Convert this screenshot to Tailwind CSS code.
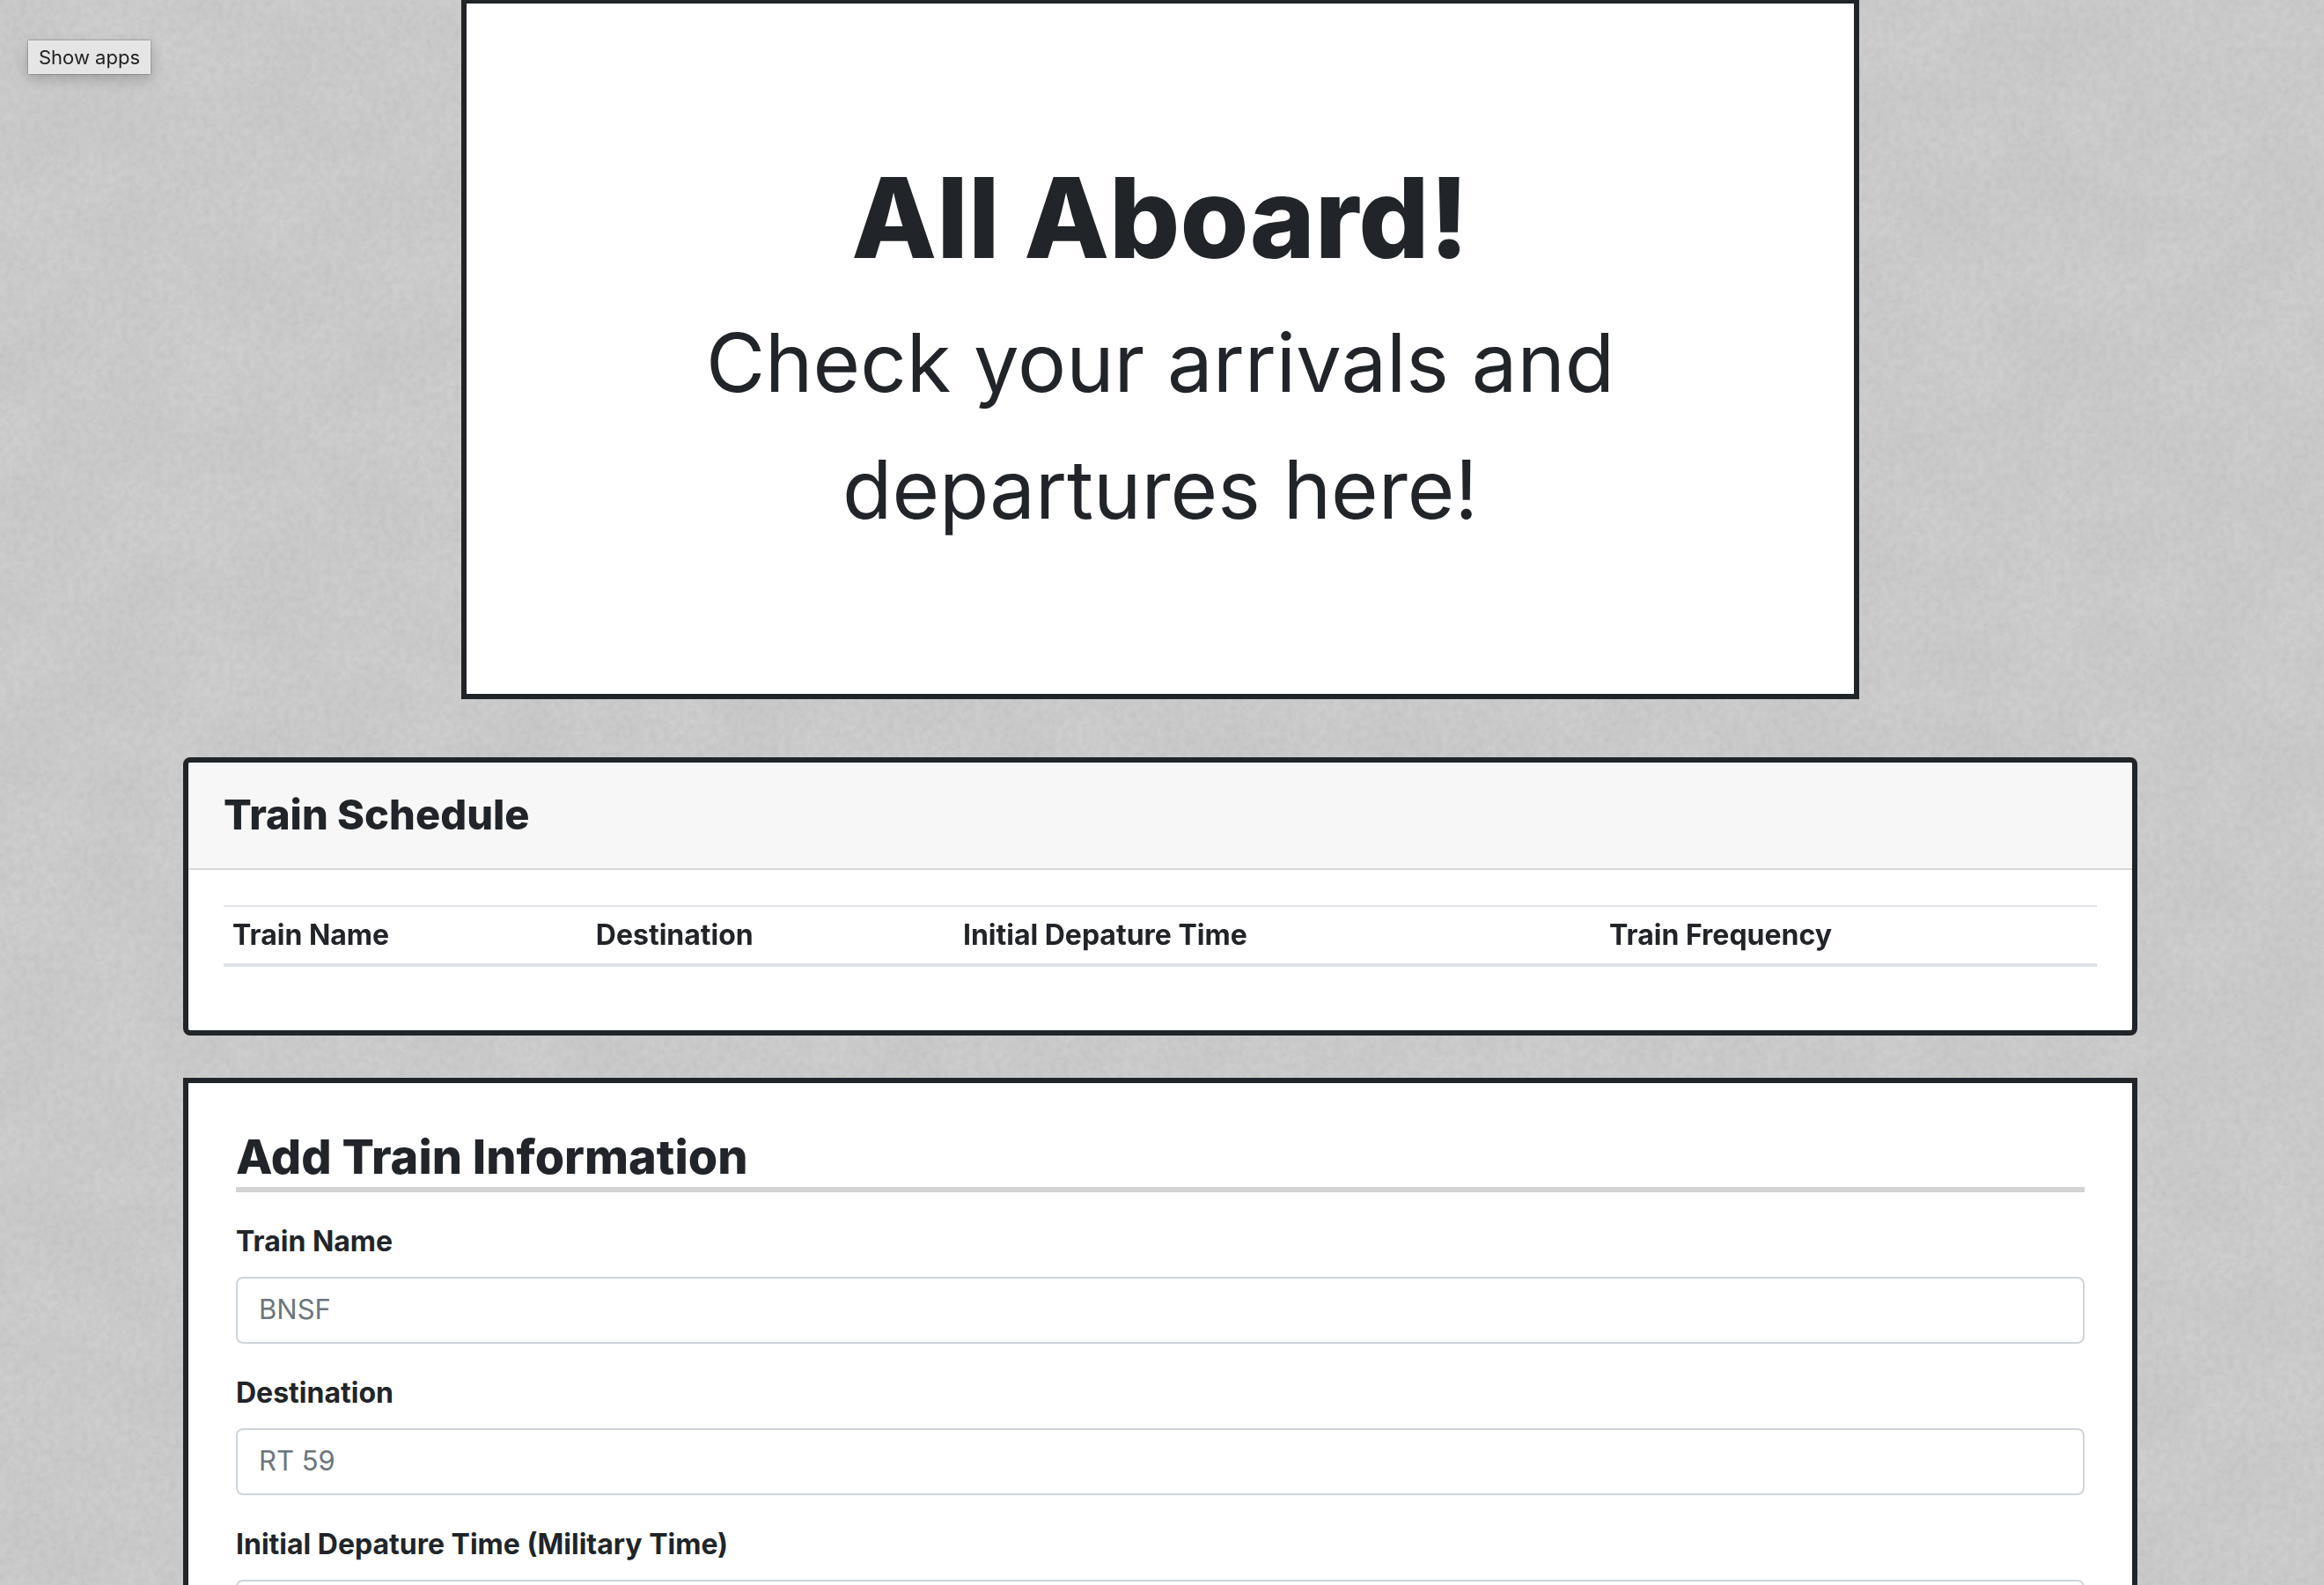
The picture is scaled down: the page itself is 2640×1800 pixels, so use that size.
<!DOCTYPE html>
<html lang="en">
<head>
<meta charset="utf-8">
<meta name="viewport" content="width=device-width, initial-scale=1">
<title>Train Schedule</title>
<script src="https://cdn.jsdelivr.net/npm/@tailwindcss/browser@4"></script>
</head>
<body class="relative isolate min-h-screen overflow-x-hidden bg-[#cecece] pr-1 font-['Inter',sans-serif] text-[32px] leading-[48px] text-[#212529]">

<!-- Concrete texture -->
<svg class="pointer-events-none fixed inset-0 -z-10 size-full" aria-hidden="true">
  <filter id="grain" x="0" y="0" width="100%" height="100%" color-interpolation-filters="sRGB">
    <feTurbulence type="fractalNoise" baseFrequency="0.13" numOctaves="3" seed="4"/>
    <feColorMatrix values="0 0 0 0 0  0 0 0 0 0  0 0 0 0 0  0.07 0 0 0 -0.022"/>
  </filter>
  <filter id="stain" x="0" y="0" width="100%" height="100%" color-interpolation-filters="sRGB">
    <feTurbulence type="fractalNoise" baseFrequency="0.011" numOctaves="5" seed="11"/>
    <feColorMatrix values="0 0 0 0 0  0 0 0 0 0  0 0 0 0 0  0.036 0 0 0 -0.01"/>
  </filter>
  <rect width="100%" height="100%" filter="url(#grain)"/>
  <rect width="100%" height="100%" filter="url(#stain)"/>
</svg>

<main class="mx-auto flex w-full max-w-[2220px] flex-col items-center">
  <header class="mb-[66px] w-full max-w-[1588px] border-6 border-t-4 border-[#212529] bg-white px-16 pt-[166px] pb-40 text-center">
    <h1 class="mb-4 text-[126px] leading-[154px] font-extrabold">All Aboard!</h1>
    <p class="mx-auto max-w-[1270px] text-[92px] leading-[144px] font-normal">Check your arrivals and departures here!</p>
  </header>

  <section class="mb-12 w-full overflow-hidden rounded-lg border-6 border-[#212529] bg-white">
    <h2 class="border-b-2 border-[#d8d8d8] bg-[#f7f7f7] px-10 pt-[30px] pb-8 text-[47px] leading-[58px] font-extrabold">Train Schedule</h2>
    <div class="px-10 pt-10 pb-[72px]">
      <table class="w-full table-fixed border-separate border-spacing-0 text-left">
        <thead>
          <tr>
            <th scope="col" class="w-[19.4%] border-t-2 border-b-4 border-[#dee2e6] px-[10px] py-2 font-bold">Train Name</th>
            <th scope="col" class="w-[19.6%] border-t-2 border-b-4 border-[#dee2e6] px-[10px] py-2 font-bold">Destination</th>
            <th scope="col" class="w-[34.5%] border-t-2 border-b-4 border-[#dee2e6] px-[10px] py-2 font-bold">Initial Depature Time</th>
            <th scope="col" class="border-t-2 border-b-4 border-[#dee2e6] px-[10px] py-2 font-bold">Train Frequency</th>
          </tr>
        </thead>
        <tbody></tbody>
      </table>
    </div>
  </section>

  <form class="w-full border-6 border-[#212529] bg-white px-[54px] py-[50px]">
    <h2 class="mb-8 border-b-6 border-[#d3d3d3] text-[54px] leading-[68px] font-extrabold">Add Train Information</h2>
    <div class="mb-8">
      <label for="train-name" class="mb-4 block font-bold">Train Name</label>
      <input id="train-name" type="text" placeholder="BNSF" class="block h-[76px] w-full rounded-lg border-2 border-[#ced4da] bg-white px-6 pb-1 text-[31px] placeholder:text-[#6c757d]">
    </div>
    <div class="mb-8">
      <label for="destination" class="mb-4 block font-bold">Destination</label>
      <input id="destination" type="text" placeholder="RT 59" class="block h-[76px] w-full rounded-lg border-2 border-[#ced4da] bg-white px-6 pb-1 text-[31px] placeholder:text-[#6c757d]">
    </div>
    <div>
      <label for="first-time" class="mb-4 block font-bold">Initial Depature Time (Military Time)</label>
      <input id="first-time" type="text" class="block h-[76px] w-full rounded-lg border-2 border-[#ced4da] bg-white px-6 pb-1 text-[31px]">
    </div>
  </form>
</main>

<div role="tooltip" class="absolute top-[46px] left-8 border border-[#ededed] bg-[#e5e5e5] px-[11px] text-[22px] leading-9 text-[#222222] shadow-[0_0_2px_rgba(0,0,0,0.5),0_6px_16px_rgba(0,0,0,0.2)]">Show apps</div>

</body>
</html>
